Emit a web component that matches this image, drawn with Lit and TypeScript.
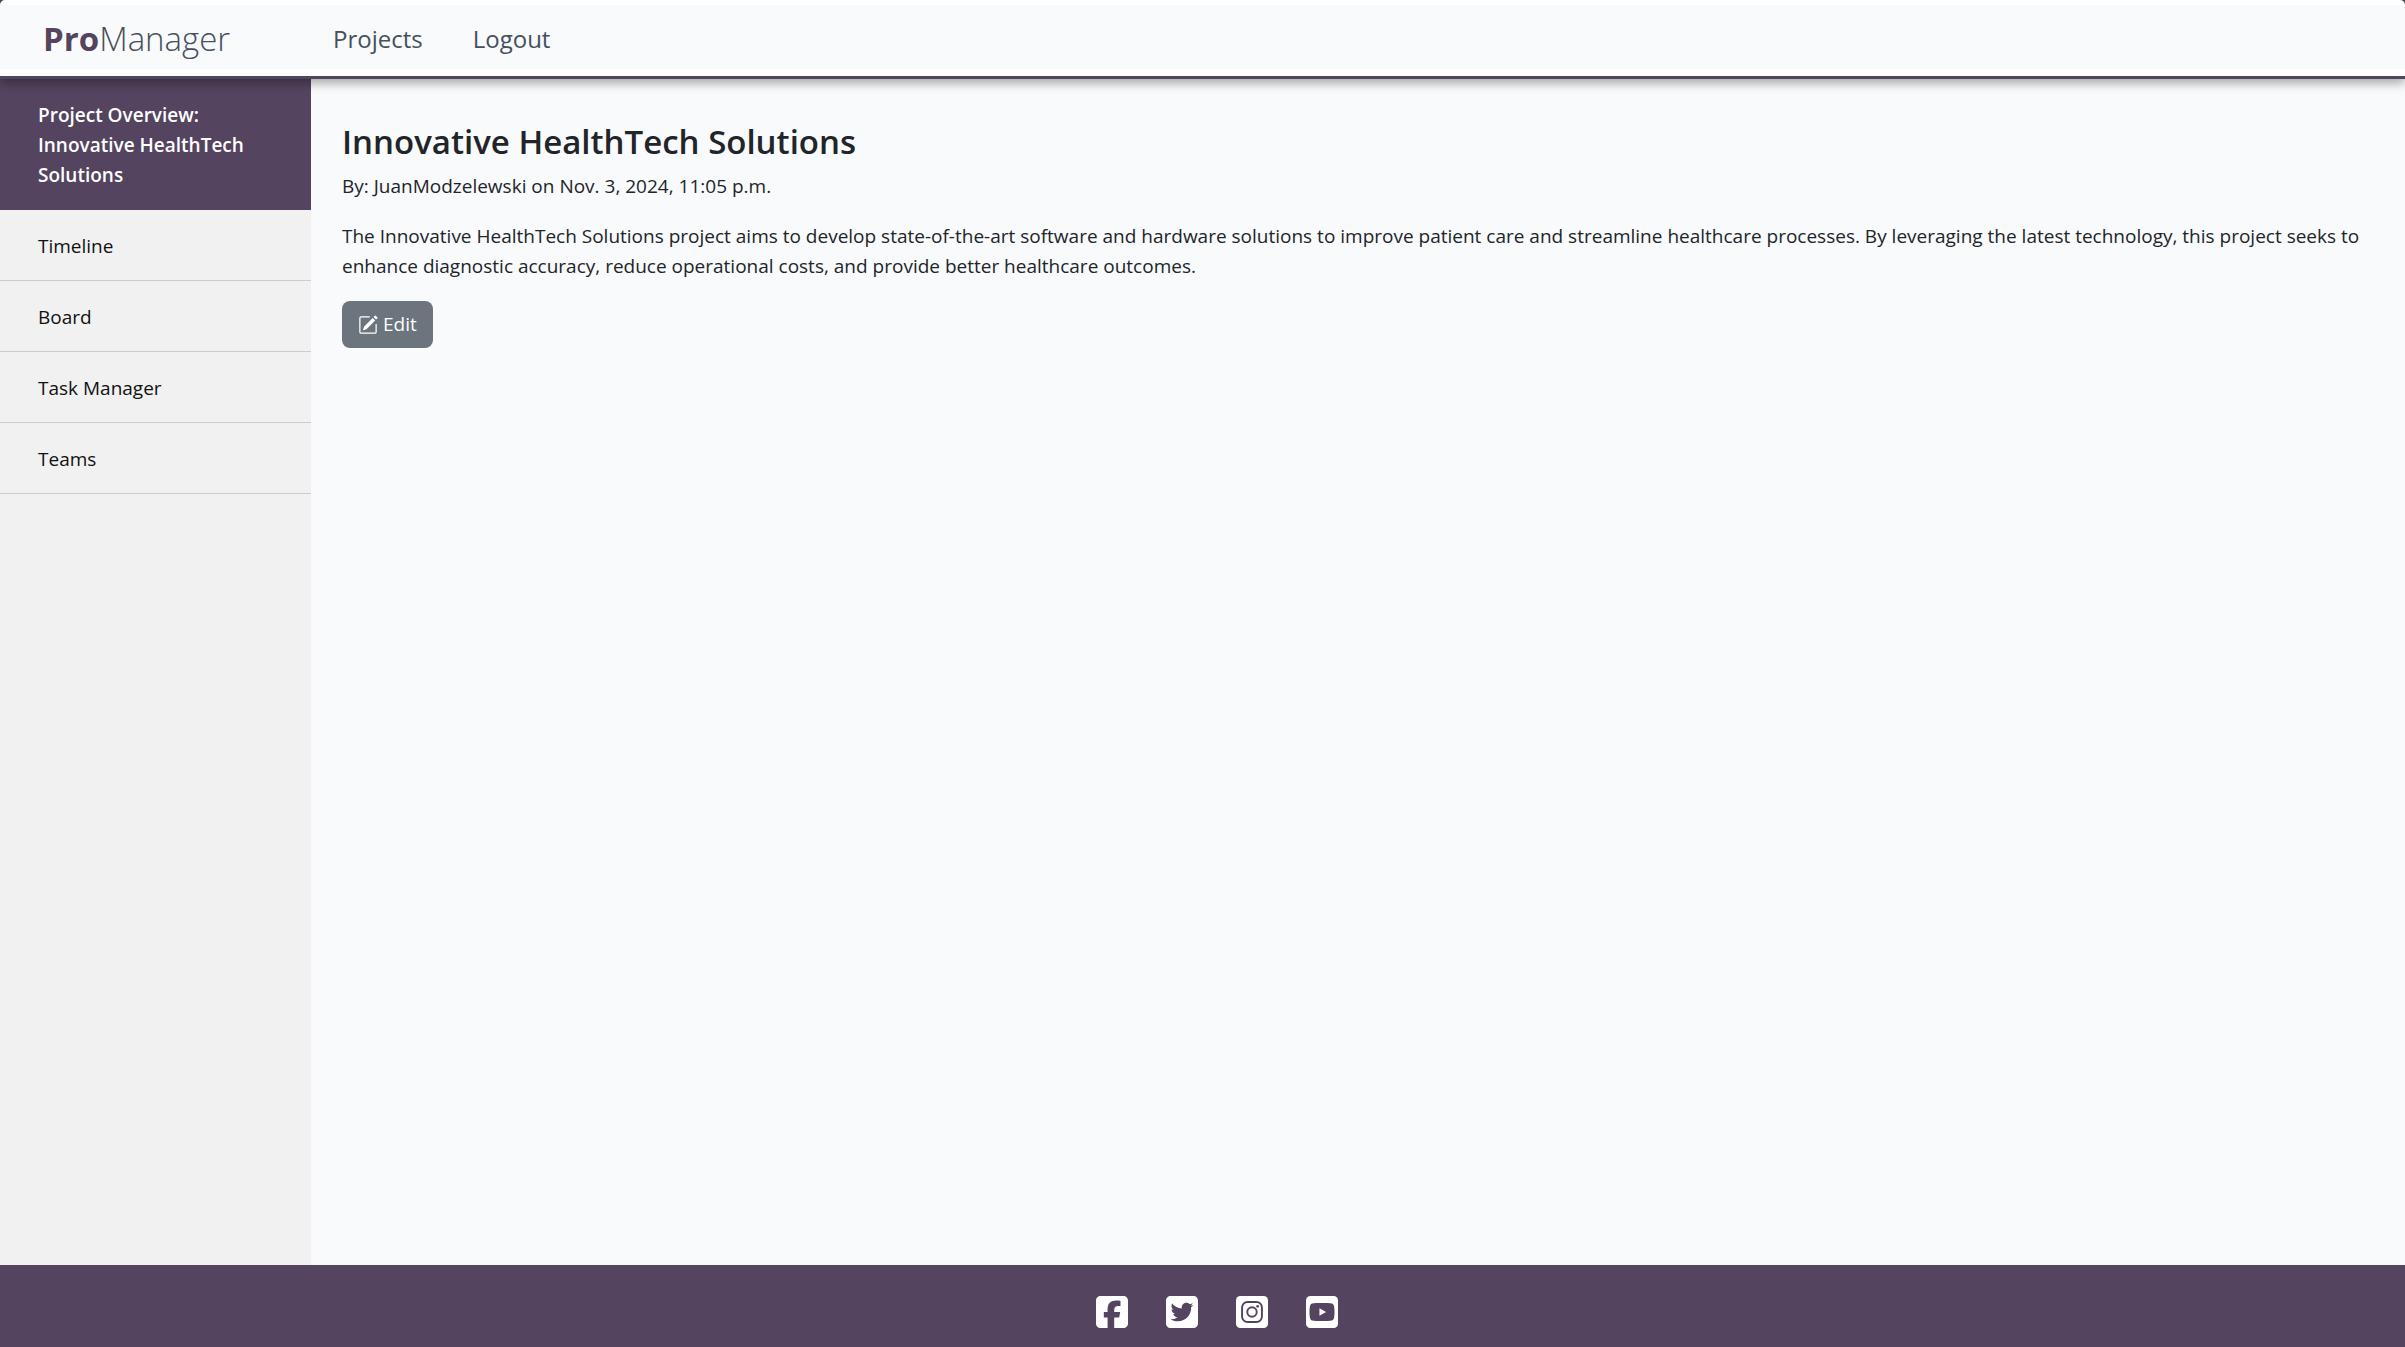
import { LitElement, html, svg, css } from "lit";
import { customElement, property } from "lit/decorators.js";

const SOCIAL = [
  {
    name: "Facebook",
    art: svg`<path fill="#fff" d="M64 32C28.7 32 0 60.7 0 96V416c0 35.3 28.7 64 64 64h98.2V334.2H109.4V256h52.8V222.3c0-87.1 39.4-127.5 125-127.5c16.2 0 44.2 3.2 55.7 6.4V172c-6-.6-16.5-1-29.6-1c-42 0-58.2 15.9-58.2 57.2V256h83.6l-14.4 78.2H255V480H384c35.3 0 64-28.7 64-64V96c0-35.3-28.7-64-64-64H64z"/>`,
  },
  {
    name: "Twitter",
    art: svg`<path fill="#fff" d="M64 32C28.7 32 0 60.7 0 96V416c0 35.3 28.7 64 64 64H384c35.3 0 64-28.7 64-64V96c0-35.3-28.7-64-64-64H64zM351.3 199.3v0c0 86.7-66 186.6-186.6 186.6c-37.2 0-71.7-10.8-100.7-29.4c5.3 .6 10.4 .8 15.8 .8c30.7 0 58.9-10.4 81.4-28c-28.8-.6-53-19.5-61.3-45.5c10.1 1.5 19.2 1.5 29.6-1.2c-30-6.1-52.5-32.5-52.5-64.4v-.8c8.7 4.9 18.9 7.9 29.6 8.3c-9-6-16.4-14.1-21.5-23.6s-7.8-20.2-7.7-31c0-12.2 3.2-23.4 8.9-33.1c32.3 39.8 80.8 65.8 135.2 68.6c-9.3-44.5 24-80.6 64-80.6c18.9 0 35.9 7.9 47.9 20.7c14.8-2.8 29-8.3 41.6-15.8c-4.9 15.2-15.2 28-28.8 36.1c13.2-1.4 26-5.1 37.8-10.2c-8.9 13.1-20.1 24.7-32.9 34c.2 2.8 .2 5.7 .2 8.5z"/>`,
  },
  {
    name: "Instagram",
    art: svg`<rect y="32" width="448" height="448" rx="60" fill="#fff"/>
      <g fill="none" stroke="#544460" stroke-width="27">
        <rect x="85" y="117" width="278" height="278" rx="76"/>
        <circle cx="224" cy="256" r="66"/>
      </g>
      <circle cx="303" cy="177" r="19" fill="#544460"/>`,
  },
  {
    name: "YouTube",
    art: svg`<rect y="32" width="448" height="448" rx="60" fill="#fff"/>
      <path fill="#544460" d="M224 130c-60 0-112 2-136 8c-16 4-27 15-31 31c-6 24-8 56-8 87s2 63 8 87c4 16 15 27 31 31c24 6 76 8 136 8s112-2 136-8c16-4 27-15 31-31c6-24 8-56 8-87s-2-63-8-87c-4-16-15-27-31-31c-24-6-76-8-136-8z"/>
      <path fill="#fff" d="M188 202L282 256L188 310z"/>`,
  },
];

@customElement("site-header")
export class SiteHeader extends LitElement {
  static styles = css`
    :host {
      display: block;
      position: relative;
      z-index: 1;
    }
    .bar {
      display: flex;
      align-items: center;
      box-sizing: border-box;
      padding: 5px 0 7px;
      background: #fff;
      border-bottom: 3px solid #50465f;
      border-radius: 5px 5px 0 0;
      box-shadow: 0 5px 10px rgba(0, 0, 0, 0.3);
    }
    .inner {
      flex: 1;
      display: flex;
      align-items: center;
      box-sizing: border-box;
      min-height: 64px;
      padding-top: 3px;
      background: #f9fafc;
    }
    .brand {
      box-sizing: border-box;
      width: 311px;
      padding-left: 43px;
      font-size: 33px;
      line-height: 48px;
      font-weight: 300;
      color: #46505c;
      text-decoration: none;
    }
    .brand-strong {
      font-weight: 700;
      color: #544460;
    }
    .links {
      display: flex;
      gap: 50px;
      padding-left: 22px;
    }
    .link {
      font-size: 24px;
      line-height: 36px;
      color: #46505c;
      text-decoration: none;
    }
  `;

  render() {
    return html`
      <header class="bar">
        <div class="inner">
          <a class="brand" href="#"><span class="brand-strong">Pro</span>Manager</a>
          <nav class="links">
            <a class="link" href="#projects">Projects</a>
            <a class="link" href="#logout">Logout</a>
          </nav>
        </div>
      </header>
    `;
  }
}

@customElement("project-sidebar")
export class ProjectSidebar extends LitElement {
  @property() project = "";

  static styles = css`
    :host {
      display: block;
      width: 311px;
      flex: none;
      background: #f1f1f1;
    }
    .item {
      display: block;
      padding: 21px 38px 19px;
      border-bottom: 1px solid #ccc;
      font-size: 19px;
      line-height: 30px;
      color: #111;
      text-decoration: none;
    }
    .active {
      background: #544460;
      border-color: #544460;
      color: #fff;
      font-weight: 600;
    }
  `;

  render() {
    return html`
      <nav>
        <a class="item active" href="#overview">Project Overview: ${this.project}</a>
        ${["Timeline", "Board", "Task Manager", "Teams"].map(
          (label) => html`<a class="item" href="#">${label}</a>`
        )}
      </nav>
    `;
  }
}

@customElement("site-footer")
export class SiteFooter extends LitElement {
  static styles = css`
    :host {
      display: block;
      background: #544460;
    }
    .list {
      display: flex;
      justify-content: center;
      gap: 38px;
      margin: 0;
      padding: 31px 0 19px 28px;
      list-style: none;
    }
    .link,
    .icon {
      display: block;
      width: 32px;
      height: 32px;
    }
  `;

  render() {
    return html`
      <footer>
        <ul class="list">
          ${SOCIAL.map(
            (item) => html`<li>
              <a class="link" href="#" aria-label=${item.name}>
                <svg class="icon" viewBox="0 32 448 448" aria-hidden="true">${item.art}</svg>
              </a>
            </li>`
          )}
        </ul>
      </footer>
    `;
  }
}

@customElement("app-root")
export class AppRoot extends LitElement {
  static styles = css`
    :host {
      display: flex;
      flex-direction: column;
      min-height: 100vh;
      background: #4c4c50;
      font-family: "Open Sans", "Noto Sans", sans-serif;
      color: #212529;
    }
    .body {
      flex: 1;
      display: flex;
      background: #f9fafc;
    }
    .main {
      flex: 1;
      min-width: 0;
      padding: 41px 31px;
      font-size: 19px;
      line-height: 30px;
    }
    .title {
      margin: 0 0 8px;
      font-size: 33px;
      line-height: 43px;
      font-weight: 600;
    }
    .text {
      margin: 0 0 20px;
    }
    .edit {
      display: inline-flex;
      align-items: center;
      gap: 5px;
      padding: 8px 16px;
      border: 0;
      border-radius: 8px;
      background: #6c757d;
      color: #fff;
      font: inherit;
      line-height: 31px;
    }
    .pencil {
      width: 20px;
      height: 20px;
      fill: currentColor;
    }
  `;

  render() {
    const project = "Innovative HealthTech Solutions";
    return html`
      <site-header></site-header>
      <div class="body">
        <project-sidebar .project=${project}></project-sidebar>
        <main class="main">
          <h2 class="title">${project}</h2>
          <p class="text">By: JuanModzelewski on Nov. 3, 2024, 11:05 p.m.</p>
          <p class="text">
            The Innovative HealthTech Solutions project aims to develop state-of-the-art software
            and hardware solutions to improve patient care and streamline healthcare processes. By
            leveraging the latest technology, this project seeks to enhance diagnostic accuracy,
            reduce operational costs, and provide better healthcare outcomes.
          </p>
          <button class="edit" type="button">
            <svg class="pencil" viewBox="0 0 16 16" aria-hidden="true">
              <path d="M15.502 1.94a.5.5 0 0 1 0 .706L14.459 3.69l-2-2L13.502.646a.5.5 0 0 1 .707 0l1.293 1.293zm-1.75 2.456-2-2L4.939 9.21a.5.5 0 0 0-.121.196l-.805 2.414a.25.25 0 0 0 .316.316l2.414-.805a.5.5 0 0 0 .196-.12l6.813-6.814z"/>
              <path fill-rule="evenodd" d="M1 13.5A1.5 1.5 0 0 0 2.5 15h11a1.5 1.5 0 0 0 1.5-1.5v-6a.5.5 0 0 0-1 0v6a.5.5 0 0 1-.5.5h-11a.5.5 0 0 1-.5-.5v-11a.5.5 0 0 1 .5-.5H9a.5.5 0 0 0 0-1H2.5A1.5 1.5 0 0 0 1 2.5z"/>
            </svg>
            Edit
          </button>
        </main>
      </div>
      <site-footer></site-footer>
    `;
  }
}
